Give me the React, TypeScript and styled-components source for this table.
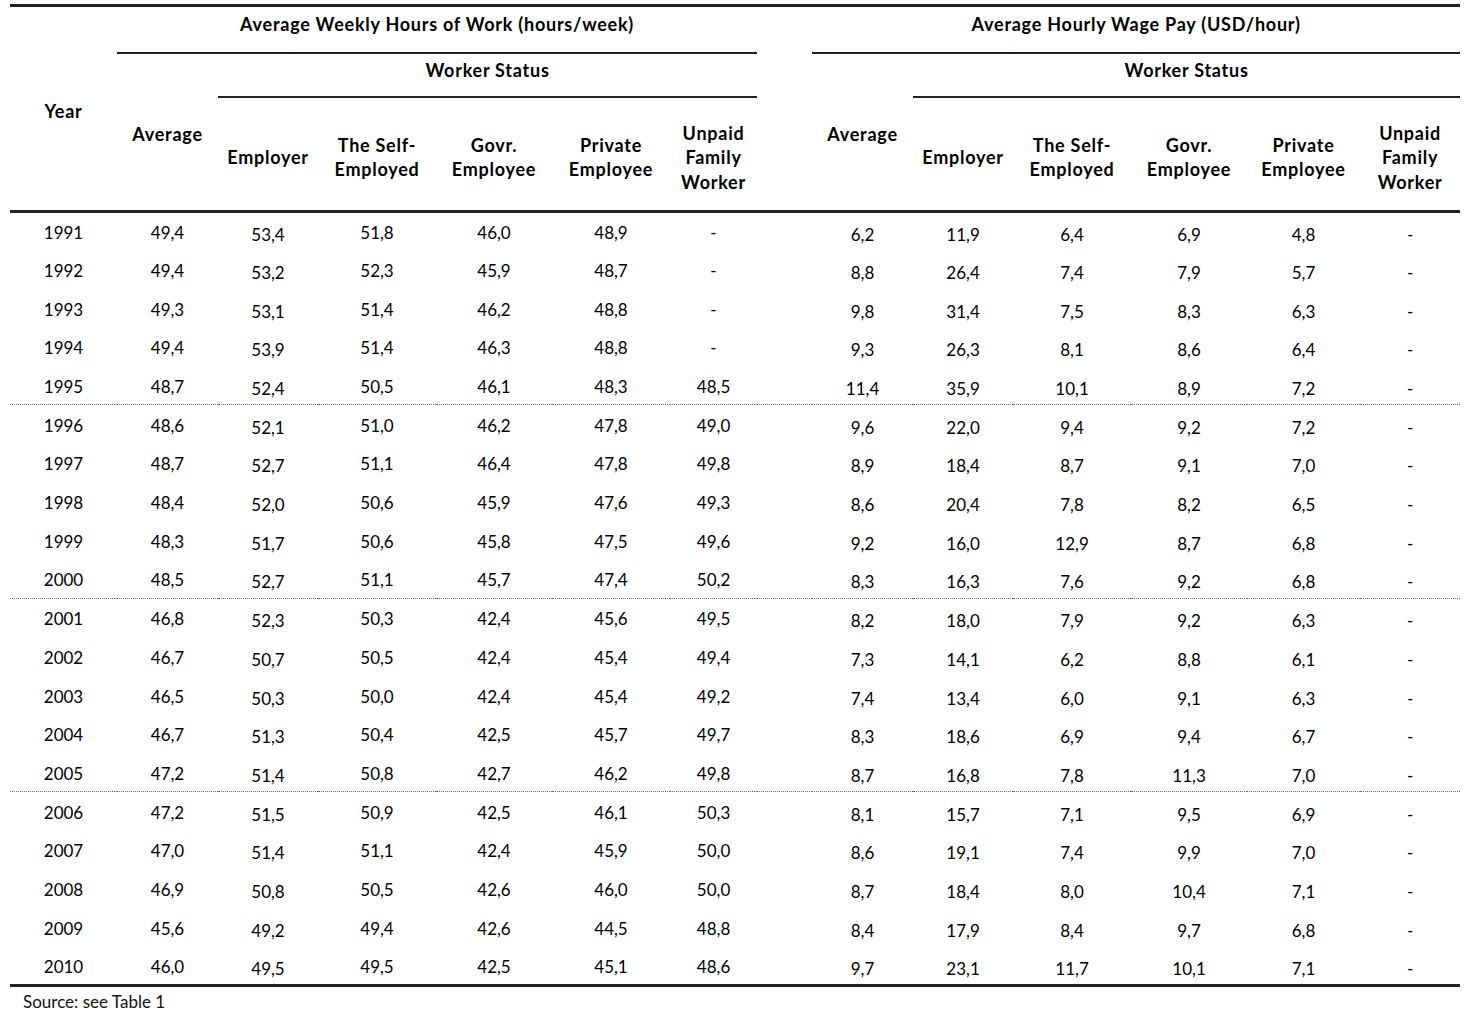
import React from "react";
import styled, { createGlobalStyle } from "styled-components";

const Global = createGlobalStyle`
  html, body { margin: 0; padding: 0; background: #ffffff; }
  body { font-family: Lato, "Open Sans", sans-serif; color: #000; }
`;

const Page = styled.div`
  padding: 4px 12px 0 10px;
  width: 1450px;
`;

const Table = styled.table`
  width: 1450px;
  table-layout: fixed;
  border-collapse: collapse;
  border-top: 3px solid #222;
  border-bottom: 3px solid #222;
  font-size: 17px;
`;

const Head = styled.thead`
  border-bottom: 3px solid #222;
`;

const HeadRow = styled.tr<{ $h: number }>`
  height: ${(p) => p.$h}px;
`;

const Th = styled.th<{ $rule?: boolean; $pt?: number; $pb?: number }>`
  font-weight: 700;
  font-size: 18px;
  letter-spacing: 0.75px;
  text-align: center;
  vertical-align: middle;
  padding: ${(p) => `${p.$pt ?? 0}px 0 ${p.$pb ?? 0}px 0`};
  line-height: 24.5px;
  border-bottom: ${(p) => (p.$rule ? "2px solid #222" : "none")};
`;

const Tr = styled.tr<{ $dotted?: boolean }>`
  height: 38.7px;
  border-bottom: ${(p) => (p.$dotted ? "1px dotted #666" : "none")};
`;

const Td = styled.td<{ $low?: boolean }>`
  text-align: center;
  vertical-align: middle;
  padding: ${(p) => (p.$low ? "7px 0 0 0" : "3px 0 0 0")};
  line-height: 20px;
  font-weight: 400;
`;

const Source = styled.div`
  font-size: 17px;
  padding: 4px 0 0 13px;
  color: #111;
`;

const widths = [107, 101, 100, 118, 116, 118, 87, 55, 101, 100, 118, 116, 113, 100];

const statusHeads: React.ReactNode[] = [
  "Employer",
  <>The Self-<br />Employed</>,
  <>Govr.<br />Employee</>,
  <>Private<br />Employee</>,
  <>Unpaid<br />Family<br />Worker</>,
];

type Row = [string, string[], string[]];

const rows: Row[] = [
  ["1991", ["49,4", "53,4", "51,8", "46,0", "48,9", "-"], ["6,2", "11,9", "6,4", "6,9", "4,8", "-"]],
  ["1992", ["49,4", "53,2", "52,3", "45,9", "48,7", "-"], ["8,8", "26,4", "7,4", "7,9", "5,7", "-"]],
  ["1993", ["49,3", "53,1", "51,4", "46,2", "48,8", "-"], ["9,8", "31,4", "7,5", "8,3", "6,3", "-"]],
  ["1994", ["49,4", "53,9", "51,4", "46,3", "48,8", "-"], ["9,3", "26,3", "8,1", "8,6", "6,4", "-"]],
  ["1995", ["48,7", "52,4", "50,5", "46,1", "48,3", "48,5"], ["11,4", "35,9", "10,1", "8,9", "7,2", "-"]],
  ["1996", ["48,6", "52,1", "51,0", "46,2", "47,8", "49,0"], ["9,6", "22,0", "9,4", "9,2", "7,2", "-"]],
  ["1997", ["48,7", "52,7", "51,1", "46,4", "47,8", "49,8"], ["8,9", "18,4", "8,7", "9,1", "7,0", "-"]],
  ["1998", ["48,4", "52,0", "50,6", "45,9", "47,6", "49,3"], ["8,6", "20,4", "7,8", "8,2", "6,5", "-"]],
  ["1999", ["48,3", "51,7", "50,6", "45,8", "47,5", "49,6"], ["9,2", "16,0", "12,9", "8,7", "6,8", "-"]],
  ["2000", ["48,5", "52,7", "51,1", "45,7", "47,4", "50,2"], ["8,3", "16,3", "7,6", "9,2", "6,8", "-"]],
  ["2001", ["46,8", "52,3", "50,3", "42,4", "45,6", "49,5"], ["8,2", "18,0", "7,9", "9,2", "6,3", "-"]],
  ["2002", ["46,7", "50,7", "50,5", "42,4", "45,4", "49,4"], ["7,3", "14,1", "6,2", "8,8", "6,1", "-"]],
  ["2003", ["46,5", "50,3", "50,0", "42,4", "45,4", "49,2"], ["7,4", "13,4", "6,0", "9,1", "6,3", "-"]],
  ["2004", ["46,7", "51,3", "50,4", "42,5", "45,7", "49,7"], ["8,3", "18,6", "6,9", "9,4", "6,7", "-"]],
  ["2005", ["47,2", "51,4", "50,8", "42,7", "46,2", "49,8"], ["8,7", "16,8", "7,8", "11,3", "7,0", "-"]],
  ["2006", ["47,2", "51,5", "50,9", "42,5", "46,1", "50,3"], ["8,1", "15,7", "7,1", "9,5", "6,9", "-"]],
  ["2007", ["47,0", "51,4", "51,1", "42,4", "45,9", "50,0"], ["8,6", "19,1", "7,4", "9,9", "7,0", "-"]],
  ["2008", ["46,9", "50,8", "50,5", "42,6", "46,0", "50,0"], ["8,7", "18,4", "8,0", "10,4", "7,1", "-"]],
  ["2009", ["45,6", "49,2", "49,4", "42,6", "44,5", "48,8"], ["8,4", "17,9", "8,4", "9,7", "6,8", "-"]],
  ["2010", ["46,0", "49,5", "49,5", "42,5", "45,1", "48,6"], ["9,7", "23,1", "11,7", "10,1", "7,1", "-"]],
];

export default function App() {
  return (
    <Page>
      <Global />
      <Table>
        <colgroup>
          {widths.map((w, i) => (
            <col key={i} style={{ width: w }} />
          ))}
        </colgroup>
        <Head>
          <HeadRow $h={47}>
            <Th rowSpan={3} $pt={6}>Year</Th>
            <Th colSpan={6} $rule $pb={11}>Average Weekly Hours of Work (hours/week)</Th>
            <Th rowSpan={3} />
            <Th colSpan={6} $rule $pb={11}>Average Hourly Wage Pay (USD/hour)</Th>
          </HeadRow>
          <HeadRow $h={44}>
            <Th rowSpan={2} $pt={5}>Average</Th>
            <Th colSpan={5} $rule $pb={9}>Worker Status</Th>
            <Th rowSpan={2} $pt={5}>Average</Th>
            <Th colSpan={5} $rule $pb={9}>Worker Status</Th>
          </HeadRow>
          <HeadRow $h={115}>
            {statusHeads.map((h, i) => (
              <Th key={`l${i}`} $pt={7}>{h}</Th>
            ))}
            {statusHeads.map((h, i) => (
              <Th key={`r${i}`} $pt={7}>{h}</Th>
            ))}
          </HeadRow>
        </Head>
        <tbody>
          {rows.map(([year, left, right], i) => (
            <Tr key={year} $dotted={i === 4 || i === 9 || i === 14}>
              <Td>{year}</Td>
              {left.map((v, j) => (
                <Td key={`l${j}`} $low={j === 1}>{v}</Td>
              ))}
              <Td />
              {right.map((v, j) => (
                <Td key={`r${j}`} $low>{v}</Td>
              ))}
            </Tr>
          ))}
        </tbody>
      </Table>
      <Source>Source: see Table 1</Source>
    </Page>
  );
}
